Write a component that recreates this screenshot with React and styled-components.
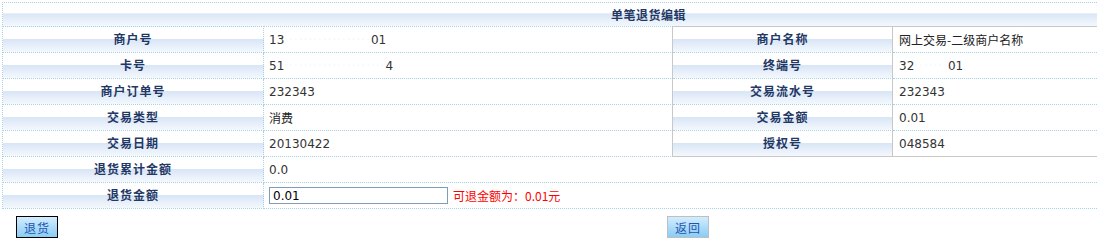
import styled, { createGlobalStyle } from "styled-components";

const GlobalStyle = createGlobalStyle`
  body {
    margin: 0;
    background: #ffffff;
    font-family: "DejaVu Sans", "Noto Sans CJK SC", sans-serif;
    font-size: 12px;
  }
`;

const DOT = "1px dotted #a9d1e6";
const GRAY = "1px solid #c8c8c8";

const FormTable = styled.div`
  display: grid;
  grid-template-columns: 261px 409px 220px 1fr;
  margin: 2px 2px 0 2px;
  border-top: ${DOT};
  border-left: ${DOT};
`;

const Title = styled.div`
  grid-column: 1 / -1;
  height: 23px;
  padding-left: 608px;
  display: flex;
  align-items: center;
  font-family: "Noto Sans CJK SC", sans-serif;
  font-weight: bold;
  font-size: 12px;
  letter-spacing: 0.5px;
  color: #1f3866;
  background: linear-gradient(to bottom, #ffffff 0%, #ffffff 45%, #d9e6f6 46%, #f3f8fd 100%);
`;

const Cell = styled.div`
  box-sizing: border-box;
  display: flex;
  align-items: center;
  grid-column: ${(p) => p.$span || "auto"};
  border-top: ${(p) => (p.$top === "gray" ? GRAY : p.$top === "dot" ? DOT : "none")};
  border-bottom: ${(p) => (p.$bottom === "gray" ? GRAY : DOT)};
  border-right: ${(p) => (p.$right === "gray" ? GRAY : p.$right === "dot" ? DOT : "none")};
  height: ${(p) => (p.$top ? 27 : 26)}px;
`;

const Label = styled(Cell)`
  justify-content: center;
  font-family: "Noto Sans CJK SC", sans-serif;
  font-weight: bold;
  font-size: 12px;
  letter-spacing: 1px;
  color: #1f3866;
  padding-bottom: 2px;
  background: linear-gradient(to bottom, #ffffff 0%, #ffffff 48%, #d9e6f6 50%, #f4f8fd 100%);
`;

const Value = styled(Cell)`
  padding-left: ${(p) => p.$pad || 5}px;
  color: #333333;
  font-size: 12px;
`;

const Cjk = styled.span`
  font-family: "Noto Sans CJK SC", sans-serif;
  font-size: 12px;
  color: #222222;
`;

const Masked = styled.span`
  color: #f5f6f9;
  letter-spacing: 1px;
`;

const AmountInput = styled.input`
  width: 179px;
  height: 17px;
  box-sizing: border-box;
  border: 1px solid #7f9db9;
  padding: 0 3px;
  font-family: "DejaVu Sans", sans-serif;
  font-size: 12px;
  color: #000000;
  outline: none;
`;

const Hint = styled.span`
  margin-left: 5px;
  color: #ff0000;
  font-family: "Noto Sans CJK SC", sans-serif;
  font-size: 12px;
`;

const Footer = styled.div`
  display: flex;
  align-items: center;
  padding: 7px 0 0 16px;
`;

const Button = styled.button`
  width: 42px;
  height: 22px;
  margin-left: ${(p) => p.$offset || 0}px;
  padding: 0;
  box-sizing: border-box;
  border: ${(p) => (p.$dark ? "1px solid #000000" : "1px solid #bfbfbf")};
  background: linear-gradient(to bottom, #d3edfd 0%, #aedcf9 50%, #8acdf5 100%);
  color: #1d56b0;
  font-family: "Noto Sans CJK SC", sans-serif;
  font-size: 12px;
  letter-spacing: 1px;
  cursor: pointer;
`;

export default function App() {
  return (
    <>
      <GlobalStyle />
      <FormTable>
        <Title>单笔退货编辑</Title>

        <Label $top="dot" $right="dot">商户号</Label>
        <Value $top="dot" $right="gray">
          13<Masked>··················</Masked>01
        </Value>
        <Label $top="gray" $right="gray">商户名称</Label>
        <Value $top="gray" $pad={6}>
          <Cjk>网上交易-二级商户名称</Cjk>
        </Value>

        <Label $right="dot">卡号</Label>
        <Value $right="gray">
          51<Masked>·····················</Masked>4
        </Value>
        <Label $right="gray">终端号</Label>
        <Value $pad={6}>
          32<Masked>·······</Masked>01
        </Value>

        <Label $right="dot">商户订单号</Label>
        <Value $right="gray">232343</Value>
        <Label $right="gray">交易流水号</Label>
        <Value $pad={6}>232343</Value>

        <Label $right="dot">交易类型</Label>
        <Value $right="gray">
          <Cjk>消费</Cjk>
        </Value>
        <Label $right="gray">交易金额</Label>
        <Value $pad={6}>0.01</Value>

        <Label $right="dot">交易日期</Label>
        <Value $right="gray">20130422</Value>
        <Label $right="gray" $bottom="gray">授权号</Label>
        <Value $pad={6} $bottom="gray">048584</Value>

        <Label $right="dot">退货累计金额</Label>
        <Value $span="2 / -1">0.0</Value>

        <Label $right="dot">退货金额</Label>
        <Value $span="2 / -1">
          <AmountInput defaultValue="0.01" />
          <Hint>可退金额为：0.01元</Hint>
        </Value>
      </FormTable>
      <Footer>
        <Button $dark>退货</Button>
        <Button $offset={609}>返回</Button>
      </Footer>
    </>
  );
}
